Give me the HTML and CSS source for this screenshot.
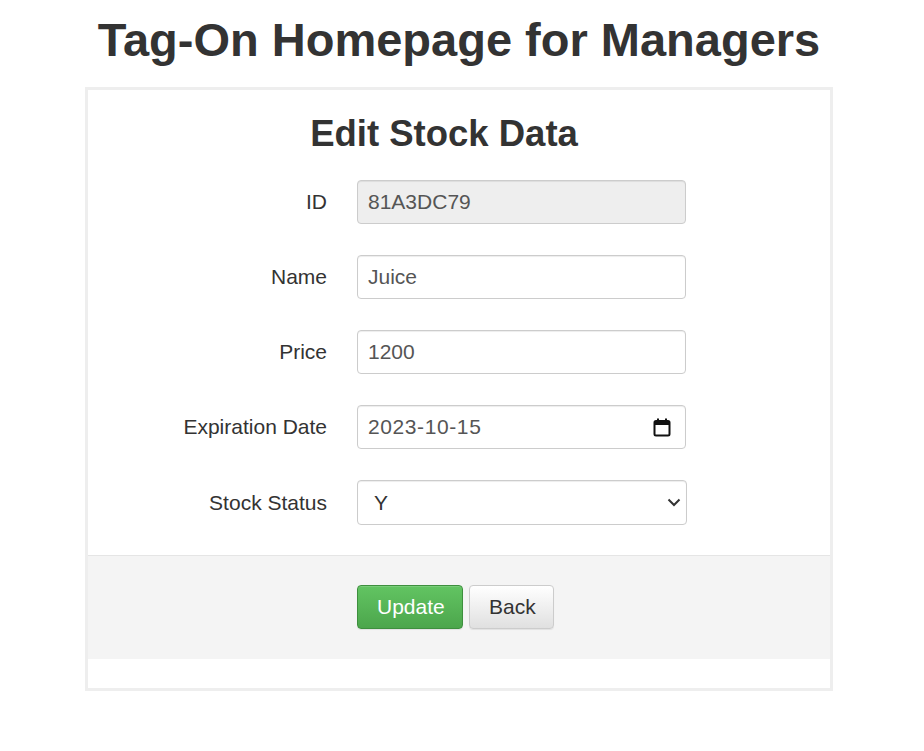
FILE: index.html
```html
<!DOCTYPE html>
<html lang="en">
<head>
<meta charset="utf-8">
<title>Tag-On Homepage for Managers</title>
<link rel="stylesheet" href="styles.css">
</head>
<body>
<div class="page">
  <h1 class="page-title">Tag-On Homepage for Managers</h1>
  <div class="card">
    <h2 class="card-title">Edit Stock Data</h2>
    <form class="form">
      <div class="form-grid">
        <label class="form-label" for="id">ID</label>
        <input class="form-control" id="id" type="text" value="81A3DC79" disabled>
        <label class="form-label" for="name">Name</label>
        <input class="form-control" id="name" type="text" value="Juice">
        <label class="form-label" for="price">Price</label>
        <input class="form-control" id="price" type="text" value="1200">
        <label class="form-label" for="exp">Expiration Date</label>
        <div class="form-control date-field">
          <input class="date-input" id="exp" type="text" value="2023-10-15">
          <svg class="cal-icon" width="18" height="19" viewBox="0 0 18 19" aria-hidden="true">
            <rect x="1.5" y="3" width="15" height="14.5" rx="1.5" fill="none" stroke="#111" stroke-width="2"/>
            <rect x="1.5" y="3" width="15" height="4" fill="#111"/>
            <rect x="4" y="0.5" width="2" height="3.5" fill="#111"/>
            <rect x="12" y="0.5" width="2" height="3.5" fill="#111"/>
          </svg>
        </div>
        <label class="form-label" for="status">Stock Status</label>
        <div class="select-wrap">
          <select class="form-control form-select" id="status">
            <option selected>Y</option>
            <option>N</option>
          </select>
          <svg class="chevron" width="14" height="9" viewBox="0 0 14 9" aria-hidden="true">
            <path d="M1.5 1.5 L7 7 L12.5 1.5" fill="none" stroke="#333" stroke-width="2"/>
          </svg>
        </div>
      </div>
      <div class="form-footer">
        <button type="submit" class="btn btn-success">Update</button>
        <button type="button" class="btn btn-default">Back</button>
      </div>
    </form>
  </div>
</div>
</body>
</html>
```

FILE: styles.css
```css
* { box-sizing: border-box; }
html, body { margin: 0; padding: 0; background: #fff; }
body {
  font-family: "Liberation Sans", Arial, Helvetica, sans-serif;
  color: #333;
  font-size: 21px;
}
.page {
  width: 748px;
  margin-left: 85px;
}
.page-title {
  margin: 0;
  padding-top: 14px;
  height: 87px;
  font-size: 47px;
  line-height: 1.1;
  font-weight: bold;
  text-align: center;
  color: #333;
  white-space: nowrap;
}
.card {
  border: 3px solid #eeeeee;
  background: #fff;
  padding-bottom: 29px;
}
.card-title {
  margin: 0;
  padding-top: 24px;
  padding-right: 30px;
  height: 90px;
  font-size: 36.5px;
  line-height: 1.1;
  font-weight: bold;
  text-align: center;
  color: #333;
}
.form-grid {
  display: grid;
  grid-template-columns: 239px 330px;
  column-gap: 30px;
  row-gap: 31px;
  align-items: center;
  padding-bottom: 30px;
}
.form-label {
  text-align: right;
  font-size: 21px;
  color: #333;
}
.form-control {
  height: 44px;
  width: 329px;
  border: 1px solid #cccccc;
  border-radius: 4px;
  padding: 0 10px;
  font-family: "Liberation Sans", Arial, sans-serif;
  font-size: 21px;
  color: #555;
  background: #fff;
  box-shadow: inset 0 1px 1px rgba(0,0,0,0.075);
  outline: none;
}
.form-control:disabled {
  background: #eeeeee;
  color: #555;
  opacity: 1;
}
.date-field {
  display: flex;
  align-items: center;
  padding-right: 14px;
}
.date-input {
  flex: 1;
  min-width: 0;
  border: 0;
  padding: 0;
  outline: none;
  background: transparent;
  font-family: "Liberation Sans", Arial, sans-serif;
  font-size: 21px;
  letter-spacing: 0.6px;
  color: #555;
}
.cal-icon { flex: none; }
.select-wrap {
  position: relative;
  width: 330px;
}
.form-select {
  appearance: none;
  -webkit-appearance: none;
  width: 330px;
  height: 45px;
  padding-left: 16px;
  color: #333;
}
.chevron {
  position: absolute;
  right: 6px;
  top: 18px;
  pointer-events: none;
}
.form-footer {
  border-top: 1px solid #e5e5e5;
  background: #f4f4f4;
  padding: 29px 0 30px 269px;
  display: flex;
  gap: 6px;
}
.btn {
  height: 44px;
  border-radius: 4px;
  font-family: "Liberation Sans", Arial, sans-serif;
  font-size: 21px;
  padding: 0 19px;
  cursor: pointer;
}
.btn-success {
  color: #fff;
  width: 106px;
  border: 1px solid #3e8f3e;
  background: linear-gradient(to bottom, #62c462 0%, #4ca64c 100%);
  box-shadow: inset 0 1px 0 rgba(255,255,255,0.15), 0 1px 1px rgba(0,0,0,0.075);
}
.btn-default {
  color: #333;
  width: 85px;
  border: 1px solid #cccccc;
  background: linear-gradient(to bottom, #ffffff 0%, #e0e0e0 100%);
  box-shadow: inset 0 1px 0 rgba(255,255,255,0.15), 0 1px 1px rgba(0,0,0,0.075);
}
```
